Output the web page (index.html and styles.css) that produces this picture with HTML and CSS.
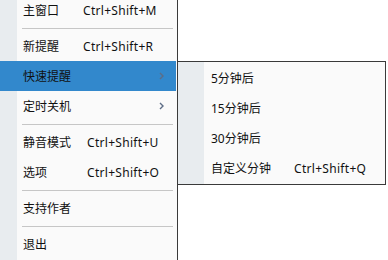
FILE: index.html
```
<!DOCTYPE html>
<html lang="zh-CN">
<head>
    <meta charset="UTF-8">
    <meta name="viewport" content="width=device-width, initial-scale=1.0">
    <title>托盘菜单</title>
    <link rel="stylesheet" href="styles.css">
</head>
<body>
    <div class="screen">
        <div class="menu">
            <div class="item"><span class="label">主窗口</span><span class="key">Ctrl+Shift+M</span></div>
            <div class="sep"></div>
            <div class="item"><span class="label">新提醒</span><span class="key">Ctrl+Shift+R</span></div>
            <div class="item active">
                <span class="label">快速提醒</span>
                <svg class="arrow" width="5" height="8" viewBox="0 0 5 8"><path d="M1 1 L4 4 L1 7" fill="none" stroke="#5d6d86" stroke-width="1.4"/></svg>
            </div>
            <div class="item">
                <span class="label">定时关机</span>
                <svg class="arrow" width="5" height="8" viewBox="0 0 5 8"><path d="M1 1 L4 4 L1 7" fill="none" stroke="#5d6d86" stroke-width="1.4"/></svg>
            </div>
            <div class="sep"></div>
            <div class="item"><span class="label wide">静音模式</span><span class="key">Ctrl+Shift+U</span></div>
            <div class="item"><span class="label wide">选项</span><span class="key">Ctrl+Shift+O</span></div>
            <div class="sep"></div>
            <div class="item"><span class="label">支持作者</span></div>
            <div class="sep"></div>
            <div class="item"><span class="label">退出</span></div>
        </div>

        <div class="submenu">
            <div class="item"><span class="label">5分钟后</span></div>
            <div class="item"><span class="label">15分钟后</span></div>
            <div class="item"><span class="label">30分钟后</span></div>
            <div class="item"><span class="label sub-wide">自定义分钟</span><span class="key">Ctrl+Shift+Q</span></div>
        </div>
    </div>
</body>
</html>
```

FILE: styles.css
```
body {
    margin: 0;
    background-color: #ffffff;
    color: #111111;
    font-family: "Noto Sans", "Noto Sans CJK SC", sans-serif;
    font-size: 12px;
    overflow: hidden;
}

.screen {
    display: flex;
    align-items: flex-start;
}

.menu {
    width: 176px;
    height: 265px;
    margin-top: -5px;
    padding-right: 1px;
    background: linear-gradient(to right, #e8ecef 0, #e8ecef 17px, #fafafa 17px);
    border-right: 1px solid #3a3a3a;
}

.item {
    height: 30px;
    display: flex;
    align-items: center;
    padding-left: 23px;
    white-space: nowrap;
}

.item.active {
    background-color: #3288cc;
}

.label {
    display: inline-block;
}

.key {
    letter-spacing: 0.3px;
}

.menu .label {
    width: 60px;
}

.menu .label.wide {
    width: 64px;
}

.arrow {
    margin-left: auto;
    margin-right: 12px;
}

.sep {
    height: 1px;
    margin: 3px 3px 2px 22px;
    background-color: #c6c6c6;
}

.submenu {
    width: 207px;
    margin-top: 61px;
    padding: 1px 0;
    background: linear-gradient(to right, #e8ecef 0, #e8ecef 26px, #fafafa 26px);
    border: 1px solid #3a3a3a;
    border-left: none;
}

.submenu .item {
    padding-left: 33px;
}

.submenu .label.sub-wide {
    width: 83px;
}
```
